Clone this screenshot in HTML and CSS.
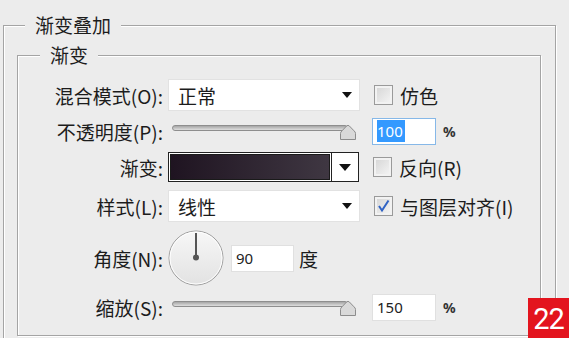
FILE: index.html
```html
<!DOCTYPE html>
<html lang="zh-CN">
<head>
    <meta charset="UTF-8">
    <meta name="viewport" content="width=device-width, initial-scale=1.0">
    <title>渐变叠加</title>
    <link rel="stylesheet" href="styles.css">
</head>
<body>
    <div class="group outer">
        <div class="group-title outer-title">渐变叠加</div>

        <div class="group inner">
            <div class="group-title inner-title">渐变</div>

            <div class="rows">
                <!-- Mode de fusion -->
                <div class="row">
                    <span class="label">混合模式(O):</span>
                    <div class="select"><span>正常</span><span class="caret"></span></div>
                    <span class="check"><span class="box"></span>仿色</span>
                </div>

                <!-- Opacité -->
                <div class="row">
                    <span class="label">不透明度(P):</span>
                    <div class="slider">
                        <div class="track"></div>
                        <svg class="thumb" width="18" height="18" viewBox="0 0 18 18">
                            <path d="M1.5 17.5 V11.5 Q1.5 10 3 8.8 L7.6 4 Q9 2.6 10.4 4 L15 8.8 Q16.5 10 16.5 11.5 V17.5 Z" fill="#d9d9d9" stroke="#8c8c8c"/>
                        </svg>
                    </div>
                    <div class="num focused"><span class="sel">100</span></div>
                    <span class="unit">%</span>
                </div>

                <!-- Dégradé -->
                <div class="row">
                    <span class="label">渐变:</span>
                    <div class="gradient">
                        <div class="gradient-fill"></div>
                        <div class="gradient-drop"><span class="caret big"></span></div>
                    </div>
                    <span class="check"><span class="box"></span>反向(R)</span>
                </div>

                <!-- Style -->
                <div class="row">
                    <span class="label">样式(L):</span>
                    <div class="select"><span>线性</span><span class="caret"></span></div>
                    <span class="check">
                        <span class="box">
                            <svg width="17" height="18" viewBox="0 0 17 18">
                                <path d="M4 9 L7 13.5 L13.5 3.5" fill="none" stroke="#2f62c4" stroke-width="2"/>
                            </svg>
                        </span>与图层对齐(I)
                    </span>
                </div>

                <!-- Angle -->
                <div class="row">
                    <span class="label">角度(N):</span>
                    <svg class="dial" width="57" height="56" viewBox="0 0 57 56">
                        <defs>
                            <linearGradient id="dialFill" x1="0" y1="0" x2="0" y2="1">
                                <stop offset="0" stop-color="#f7f7f7"/>
                                <stop offset="1" stop-color="#e2e2e2"/>
                            </linearGradient>
                        </defs>
                        <circle cx="28" cy="28" r="27" fill="url(#dialFill)" stroke="#9c9c9c"/>
                        <circle cx="28" cy="28" r="26" fill="none" stroke="#ffffff"/>
                        <line x1="28" y1="3" x2="28" y2="27" stroke="#555" stroke-width="2"/>
                        <circle cx="28" cy="27.5" r="3" fill="#555"/>
                    </svg>
                    <div class="num small"><span>90</span></div>
                    <span class="unit-cjk">度</span>
                </div>

                <!-- Echelle -->
                <div class="row">
                    <span class="label">缩放(S):</span>
                    <div class="slider">
                        <div class="track"></div>
                        <svg class="thumb" width="18" height="18" viewBox="0 0 18 18">
                            <path d="M1.5 17.5 V11.5 Q1.5 10 3 8.8 L7.6 4 Q9 2.6 10.4 4 L15 8.8 Q16.5 10 16.5 11.5 V17.5 Z" fill="#d9d9d9" stroke="#8c8c8c"/>
                        </svg>
                    </div>
                    <div class="num"><span>150</span></div>
                    <span class="unit">%</span>
                </div>
            </div>
        </div>
    </div>

    <div class="badge">22</div>
</body>
</html>
```

FILE: styles.css
```css
body {
    margin: 0;
    height: 338px;
    overflow: hidden;
    background-color: #ececec;
    font-family: "Noto Sans CJK SC", sans-serif;
    font-size: 19px;
    color: #1c1c1c;
}
.group {
    box-sizing: border-box;
    border: 1px solid #a4a4a4;
    box-shadow: inset 1px 1px 0 #fff, 1px 1px 0 #fff;
}
.outer {
    margin: 25px 0 0 3px;
    width: 553px;
    height: 313px;
    border-bottom: none;
}
.inner {
    margin: 18px 0 0 13px;
    width: 524px;
    height: 281px;
}
.group-title {
    width: max-content;
    line-height: 24px;
    margin-top: -13px;
    padding: 0 10px;
    background-color: #ececec;
}
.outer-title {
    margin-left: 21px;
}
.inner-title {
    margin-left: 22px;
}
.rows {
    margin-top: 12px;
    display: grid;
    grid-template-rows: 32px 40px 32px 46px 58px 40px;
}
.row {
    display: flex;
    align-items: center;
}
.label {
    box-sizing: border-box;
    width: 150px;
    padding-right: 5px;
    text-align: right;
    white-space: nowrap;
}
.select {
    box-sizing: border-box;
    width: 192px;
    height: 32px;
    display: flex;
    align-items: center;
    justify-content: space-between;
    padding: 0 7px 0 9px;
    background-color: #fff;
    border: 1px solid #e2e2e2;
}
.caret {
    width: 0;
    height: 0;
    border-left: 5px solid transparent;
    border-right: 5px solid transparent;
    border-top: 6px solid #111;
}
.caret.big {
    border-left-width: 6px;
    border-right-width: 6px;
    border-top-width: 7px;
}
.check {
    display: flex;
    align-items: center;
    margin-left: 14px;
    white-space: nowrap;
}
.box {
    box-sizing: border-box;
    width: 19px;
    height: 20px;
    margin-right: 7px;
    border: 1px solid #9a9a9a;
    background: linear-gradient(135deg, #d4d4d4, #f6f6f6);
    box-shadow: inset 0 0 0 2px #f2f2f2;
    display: flex;
    align-items: center;
    justify-content: center;
}
.slider {
    position: relative;
    width: 185px;
    height: 18px;
    margin-left: 4px;
}
.track {
    box-sizing: border-box;
    margin-top: 3px;
    width: 176px;
    height: 6px;
    border: 1px solid #8e8e8e;
    border-radius: 3px;
    background: linear-gradient(#a6a6a6, #dedede);
}
.thumb {
    position: absolute;
    right: 0;
    top: 0;
}
.num {
    box-sizing: border-box;
    width: 64px;
    height: 27px;
    margin-left: 15px;
    padding-left: 4px;
    display: flex;
    align-items: center;
    background-color: #fff;
    border: 1px solid #e0e0e0;
    font-family: "Noto Sans", sans-serif;
    font-size: 15px;
    color: #222;
}
.num.focused {
    border-color: #86b8e8;
}
.num.small {
    width: 63px;
    margin-left: 6px;
}
.sel {
    background-color: #3399ff;
    color: #fff;
    padding: 1px 2px 1px 0;
    line-height: 20px;
}
.unit {
    margin-left: 7px;
    font-family: "Noto Sans", sans-serif;
    font-size: 14px;
    font-weight: bold;
    color: #333;
}
.unit-cjk {
    margin-left: 5px;
}
.gradient {
    box-sizing: border-box;
    width: 191px;
    height: 30px;
    display: flex;
    border: 1px solid #222;
    background-color: #fff;
}
.gradient-fill {
    flex: 1;
    margin: 1px;
    border: 1px solid #1a1a1a;
    background: linear-gradient(to right, #1f1421, #3f3742);
}
.gradient-drop {
    width: 26px;
    display: flex;
    align-items: center;
    justify-content: center;
    border-left: 1px solid #222;
}
.dial {
    display: block;
}
.badge {
    position: fixed;
    right: 0;
    bottom: 0;
    width: 41px;
    height: 40px;
    background-color: #e3141e;
    color: #fff;
    font-family: "Liberation Sans Narrow", Roboto, sans-serif;
    font-size: 29px;
    line-height: 42px;
    text-align: center;
    letter-spacing: -1px;
}
```
